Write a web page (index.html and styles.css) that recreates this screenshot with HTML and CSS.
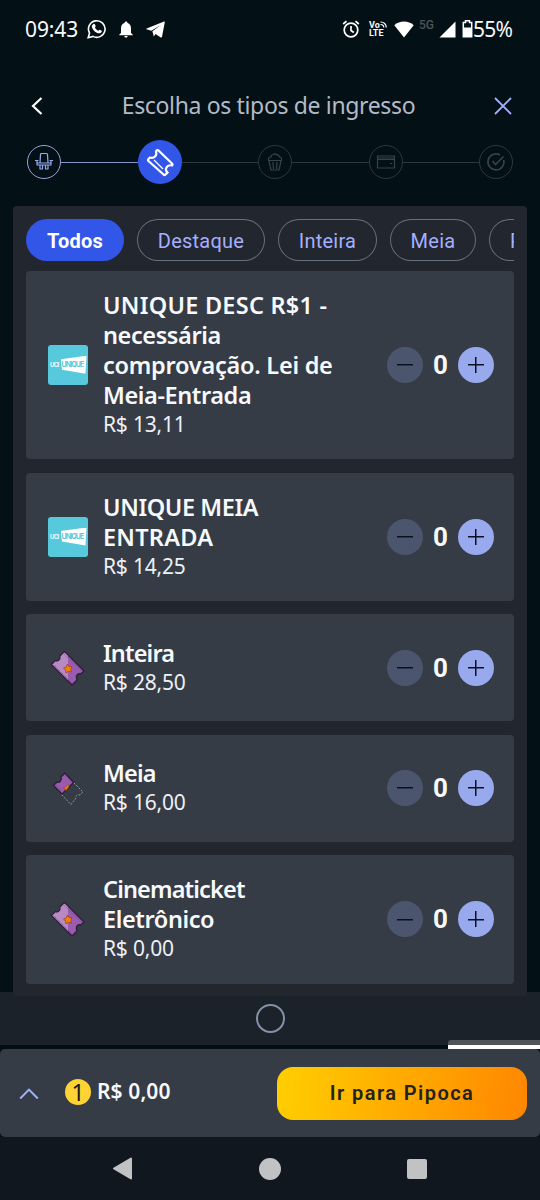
FILE: index.html
```html
<!DOCTYPE html>
<html lang="pt-BR">
<head>
<meta charset="utf-8">
<title>Escolha os tipos de ingresso</title>
<link rel="stylesheet" href="styles.css">
</head>
<body>
<svg class="defs" width="0" height="0">
  <symbol id="ticket" viewBox="0 0 40 40">
    <path d="M16.500 3.500 36 23l-3.500 3c-2-1-4.500.5-4 3.500.2 1 0 1.500.5 2.500l-5 5L3.500 16.500l4-4c2.500 1.500 5.500-1.500 4.500-4.500z" fill="#9a5cb0" stroke="#30213b" stroke-width="1.500" stroke-linejoin="round"/>
    <path d="M16.500 4.500 20 8v24L4.500 16.500l3-3c3 1 6-2 5-5z" fill="#b78ac4"/>
    <path d="m16.500 6.500 17 17m-10 11L6 17" fill="none" stroke="#6d4380" stroke-width=".8" stroke-dasharray="1 1"/>
    <path d="m19.500 16 1.500 2.500 3 .2-1.200 2.500.7 2.800-3-.7-2.500 1.700-.5-3-2-2 2.800-1z" fill="#f08013" stroke="#a8400d" stroke-width=".8"/>
  </symbol>
  <symbol id="half" viewBox="0 0 40 40">
    <path d="m26 15 9 9-3 3c-2-1-4.500.5-4 3l-5 6.500L13 26" fill="none" stroke="#939ca6" stroke-width="1" stroke-dasharray="1.900 1.400"/>
    <path d="m17 5 8.500 9.500L14 26 5.500 17.500l3.500-3.500c3 1 5-2 4-5z" fill="#9b5bad" stroke="#30213b" stroke-width="1.500"/>
    <path d="m17 7 6 6M8 17l5 5" stroke="#6d4380" stroke-width=".8" stroke-dasharray="1 1"/>
    <path d="m20 16.500 1 2-3 4-.8-1.500-2-1 2.500-1z" fill="#f08013" stroke="#a8400d" stroke-width=".6"/>
  </symbol>
</svg>
<div class="screen">
  <div class="status">
    <span class="clock">09:43</span>
    <svg class="wa" width="20" height="20" viewBox="0 0 20 20"><path d="M1.200 18.700 2.500 14A8.300 8.300 0 1 1 6 17.400z" fill="none" stroke="#fff" stroke-width="1.600"/><path d="M6.200 5.200c1-.8 1.800-.2 2.500 2l-.8 1.200c.8 1.500 2 2.700 3.500 3.400l1.200-1.100c1.800.6 2.500 1 2.200 1.700-.7 2-3 2.400-5 1.300-2.500-1.200-4.500-3.500-5-6-.1-1 .5-2 1.400-2.500z" fill="#fff"/></svg>
    <svg class="bell" width="14" height="17" viewBox="0 0 14 17"><path d="M7 .5c1 0 1.500.7 1.500 1.600C11 2.800 12 5 12 7.500V12l1.700 1.500v.8H.3v-.8L2 12V7.500C2 5 3 2.800 5.500 2.100 5.500 1.200 6 .5 7 .5zM5.300 15h3.400C8.500 16 8 16.500 7 16.500S5.500 16 5.300 15z" fill="#fff"/></svg>
    <svg class="tg" width="19" height="17" viewBox="0 0 19 17"><path d="M.5 8.300C0 8.100.1 7.700.7 7.400L18 .5c.6-.2.9.1.8.7L16 15.700c-.2.900-.8 1.100-1.600.6L9.500 13 7.800 15.500 6.400 10.200 15 4 5.300 9.800z" fill="#fff"/></svg>
    <span class="grow"></span>
    <svg class="alarm" width="18" height="18" viewBox="0 0 18 18" fill="none" stroke="#fff" stroke-width="1.700"><circle cx="9" cy="10" r="6.800"/><path d="M9 6v4.500l2.800 2M1.200 4 4.500 1.200M16.800 4l-3.300-2.800"/></svg>
    <span class="volte"><span>Vo<svg width="7" height="7" viewBox="0 0 7 7" fill="none" stroke="#fff" stroke-width="1.200"><path d="M.5 1A5.500 5.500 0 0 1 6.300 6.600M.5 3.500A3 3 0 0 1 3.800 6.600"/></svg></span><span>LTE</span></span>
    <svg class="wifi" width="20" height="17" viewBox="0 0 20 17"><path d="M.3 4.200C5.500-.8 14.500-.8 19.700 4.200L10 16.500z" fill="#fff"/></svg>
    <span class="fiveg">5G</span>
    <svg class="signal" width="17" height="17" viewBox="0 0 17 17"><path d="M16.500.5v16H.5z" fill="#fff"/></svg>
    <svg class="battery" width="11" height="18" viewBox="0 0 11 18"><path d="M3.500.8h4v1.700h2.200v14.200H1.300V2.500h2.200z" fill="none" stroke="#fff" stroke-width="1.500"/><path d="M1 7.500h9V17H1z" fill="#fff"/></svg>
    <span class="percent">55%</span>
  </div>
  <header class="header">
    <svg width="14" height="20" viewBox="0 0 14 20"><path d="M12.500 2 4 10l8.500 8" fill="none" stroke="#fff" stroke-width="2.200"/></svg>
    <h1>Escolha os tipos de ingresso</h1>
    <svg width="18" height="18" viewBox="0 0 18 18"><path d="m1 1 16 16m0-16L1 17" stroke="#a5afff" stroke-width="1.800"/></svg>
  </header>
  <div class="steps">
    <span class="step done"><svg width="20" height="20" viewBox="0 0 20 20"><path d="M6 11 6.500 2.500Q6.500 1.500 7.500 1.500h5q1 0 1 1L14 11M1 8.500h3.500M15.500 8.500H19M3 9v4h14V9M3 11h14M6 13v4h2.500v-4m3 0v4H14v-4"/></svg></span>
    <i class="line lit"></i>
    <span class="step current"><svg width="30" height="30" viewBox="0 0 30 30"><path d="M11.500 3.500q1-1 2 0L27 16.500q1 1 0 2-4-1-5.500 2t1 5l-2 2q-1 1-2 0L3.500 14q-1-1 0-2l1.500-1.500q3 1 5-1T11 5z" stroke-width="2.200"/><path d="m9 13 9 9" stroke-width="1.300"/></svg></span>
    <i class="line"></i>
    <span class="step"><svg width="18" height="20" viewBox="0 0 18 20"><path d="m3 9 2 9h8l2-9M2 8.500h14M2.500 8Q2 5 5 5q0-2.500 2.500-2.500Q9 1 11 3q2-.5 2.500 2 2.500 0 2 3M7 10l.5 7M11 10l-.5 7"/></svg></span>
    <i class="line"></i>
    <span class="step"><svg width="20" height="16" viewBox="0 0 20 16"><path d="M1.500 2h17v12h-17zM2 4h16M2 5.500h16M14 9.500h2"/></svg></span>
    <i class="line"></i>
    <span class="step"><svg width="20" height="20" viewBox="0 0 20 20"><path d="M17.700 8A8 8 0 1 1 14 3M6.500 9l3 3.500 8-8" stroke-width="1.600"/></svg></span>
  </div>
  <main class="panel">
    <nav class="chips"><span class="chip on">Todos</span><span class="chip destaque">Destaque</span><span class="chip inteira">Inteira</span><span class="chip meia">Meia</span><span class="chip promo">P</span></nav>
    <section class="card tall"><div class="thumb logo"><span class="uci">UCI</span><span class="flag">UNIQUE</span></div><div class="info"><b><span class="caps">UNIQUE DESC R$1 -</span><br>necessária<br><span class="loose">comprovação. Lei de</span><br>Meia-Entrada</b><span>R$ 13,11</span></div><div class="count"><i class="minus"></i><b>0</b><i class="plus"></i></div></section>
    <section class="card double"><div class="thumb logo"><span class="uci">UCI</span><span class="flag">UNIQUE</span></div><div class="info"><b>UNIQUE MEIA<br><span class="caps">ENTRADA</span></b><span>R$ 14,25</span></div><div class="count"><i class="minus"></i><b>0</b><i class="plus"></i></div></section>
    <section class="card"><svg class="thumb"><use href="#ticket"/></svg><div class="info"><b class="tight">Inteira</b><span>R$ 28,50</span></div><div class="count"><i class="minus"></i><b>0</b><i class="plus"></i></div></section>
    <section class="card"><svg class="thumb"><use href="#half"/></svg><div class="info"><b class="tight">Meia</b><span>R$ 16,00</span></div><div class="count"><i class="minus"></i><b>0</b><i class="plus"></i></div></section>
    <section class="card double last"><svg class="thumb"><use href="#ticket"/></svg><div class="info"><b><span class="tight">Cinematicket</span><br>Eletrônico</b><span>R$ 0,00</span></div><div class="count"><i class="minus"></i><b>0</b><i class="plus"></i></div></section>
  </main>
  <div class="strip"><i class="ring"></i></div>
  <div class="gap"><i class="sheet"></i></div>
  <footer class="cart">
    <svg width="20" height="13" viewBox="0 0 20 13"><path d="m1.200 11.500 8.800-9 8.800 9" fill="none" stroke="#a5afff" stroke-width="1.900"/></svg>
    <span class="badge">1</span><b class="total">R$ 0,00</b>
    <button>Ir para Pipoca</button>
  </footer>
  <div class="system">
    <svg width="21" height="23" viewBox="0 0 21 23"><path d="M19 1.500v20L2 11.500z" fill="#c1c2c4" stroke="#c1c2c4" stroke-width="2" stroke-linejoin="round"/></svg>
    <i class="home"></i><i class="recent"></i>
  </div>
</div>
</body>
</html>
```
FILE: styles.css
```css
* { box-sizing: border-box; }
body { margin: 0; background: #031016; font-family: "Noto Sans", sans-serif; color: #f7f9fc; }
.defs { display: block; width: 0; height: 0; }
.screen { width: 540px; height: 1200px; display: flex; flex-direction: column; overflow: hidden; }
.screen svg { flex: none; display: block; }
.status { height: 58px; flex: none; padding: 0 26px 0 25px; display: flex; align-items: center; font-size: 21px; line-height: 30px; }
.clock { width: 54px; letter-spacing: -.1px; white-space: nowrap; }
.wa { margin-left: 8px; }
.bell { margin-left: 12px; }
.tg { margin-left: 13px; }
.grow { flex: 1; }
.alarm { margin-right: 0; }
.volte { margin-left: 9px; width: 18px; display: flex; flex-direction: column; font: 700 9px/8.500px Roboto, sans-serif; }
.volte span { display: flex; white-space: nowrap; }
.wifi { margin-left: 7px; }
.fiveg { margin: -9px 0 0 5px; width: 17px; font: 500 12px/14px Roboto, sans-serif; color: #4b5558; }
.signal { margin-left: 3px; }
.battery { margin-left: 6px; }
.percent { width: 41px; white-space: nowrap; letter-spacing: -.8px; }
.header { height: 77px; flex: none; padding: 18px 28px 0 29px; display: flex; align-items: center; justify-content: space-between; }
h1 { margin: -2px 0 0; font-size: 23px; line-height: 30px; font-weight: 400; color: #b3bac5; white-space: nowrap; letter-spacing: -.35px; }
.steps { height: 54px; flex: none; padding: 0 27px; display: flex; align-items: center; }
.step { width: 34px; height: 34px; flex: none; border: 1px solid #2c383e; border-radius: 50%; display: grid; place-items: center; }
.step svg { fill: none; stroke: #37444a; stroke-width: 1.200; }
.step.done { border-color: #99a4dc; }
.step.done svg { stroke: #99a9ef; }
.step.current { width: 44px; height: 44px; background: #3156e8; border: 0; }
.step.current svg { stroke: #fff; }
.line { flex: 1; height: 1px; background: #2c383e; }
.line.lit { background: #8795c9; }
.panel { position: relative; z-index: 1; margin: 17px 13px -4px; height: 790px; flex: none; padding: 12.500px 13px 0; border-radius: 4px; background: #22262e; display: flex; flex-direction: column; gap: 13.500px; }
.chips { display: flex; gap: 13px; height: 42px; margin-bottom: -3.500px; overflow: hidden; flex: none; font: 400 20px/45px Roboto, sans-serif; color: #a5afff; }
.chip { flex: none; height: 42px; border-radius: 21px; box-shadow: inset 0 0 0 1px #647180; text-align: center; letter-spacing: .25px; }
.chip.on { width: 98px; background: #3156e8; box-shadow: none; color: #fff; font-weight: 700; }
.destaque { width: 128px; }
.inteira { width: 99px; }
.meia { width: 86px; }
.promo { width: 98px; text-align: left; padding-left: 21px; }
.card { flex: none; height: 107px; border-radius: 4px; background: #353c46; padding: 0 20px 0 22px; display: flex; align-items: center; }
.card.double { height: 128px; }
.card.last { height: 128.500px; }
.card.tall { height: 188.500px; }
.thumb { width: 40px; height: 40px; flex: none; }
.logo { border-radius: 3px; background: #57c9dc; display: flex; align-items: center; padding-left: 2px; font: 700 7px/8px Inter, sans-serif; letter-spacing: -.9px; }
.uci { width: 10.500px; font-size: 6px; white-space: nowrap; letter-spacing: -.7px; }
.flag { width: 26px; height: 18px; background: #fff; clip-path: polygon(0 20%, 100% 0, 96% 100%, 6% 78%); color: #57c9dc; line-height: 18px; padding-left: 1px; white-space: nowrap; }
.info { flex: 1; margin-left: 15px; margin-top: -1px; display: flex; flex-direction: column; line-height: 30px; white-space: nowrap; }
.info b { font-size: 23.500px; font-weight: 600; letter-spacing: -.4px; }
.info b span { font: inherit; color: inherit; }
.info b .caps { letter-spacing: .25px; }
.info b .loose { letter-spacing: -.25px; }
.info .tight { letter-spacing: -.85px; }
.info > span { font-size: 21px; line-height: 29px; color: #edf0f5; letter-spacing: -.2px; }
.count { display: flex; align-items: center; }
.count b { width: 35px; text-align: center; font: 700 26px/36px Roboto, "Noto Sans", sans-serif; }
.minus, .plus { width: 36px; height: 36px; border-radius: 50%; background: linear-gradient(#0b1121, #0b1121) center / 16px 1.500px no-repeat #4b556d; }
.plus { background: linear-gradient(#0b1121, #0b1121) center / 16px 1.500px no-repeat, linear-gradient(#0b1121, #0b1121) center / 1.500px 16px no-repeat, #98a9ee; }
.strip { height: 53px; flex: none; background: #1c222a; display: grid; place-items: center; }
.ring { width: 29px; height: 29px; border: 2px solid #8492a5; border-radius: 50%; }
.gap { position: relative; height: 4px; flex: none; background: #020d16; }
.sheet { position: absolute; right: 0; bottom: 0; width: 92px; height: 9px; border-top: 5px solid #51555a; border-radius: 3px 0 0; background: #fff; }
.cart { height: 88px; flex: none; border-radius: 5px; background: #353c46; padding: 0 13px 0 19px; display: flex; align-items: center; }
.badge { width: 26px; height: 26px; margin: -2px 0 0 26px; border-radius: 50%; background: #ffd331; color: #15191d; font-size: 23px; line-height: 26px; text-align: center; }
.total { margin: -4px 0 0 6px; font-size: 21px; font-weight: 600; white-space: nowrap; letter-spacing: .1px; }
button { width: 250px; height: 53px; margin-left: auto; border: 0; border-radius: 16px; background: linear-gradient(100deg, #ffcf00, #ff8600); color: #20231c; font: 600 20px/53px Roboto, sans-serif; letter-spacing: 1.450px; padding: 0; }
.system { flex: 1; background: #10171f; display: flex; align-items: center; padding-left: 112px; }
.home { width: 22px; height: 22px; margin-left: 126px; border-radius: 50%; background: #c1c2c4; }
.recent { width: 20px; height: 20px; margin-left: 126px; border-radius: 2px; background: #c1c2c4; }
```
